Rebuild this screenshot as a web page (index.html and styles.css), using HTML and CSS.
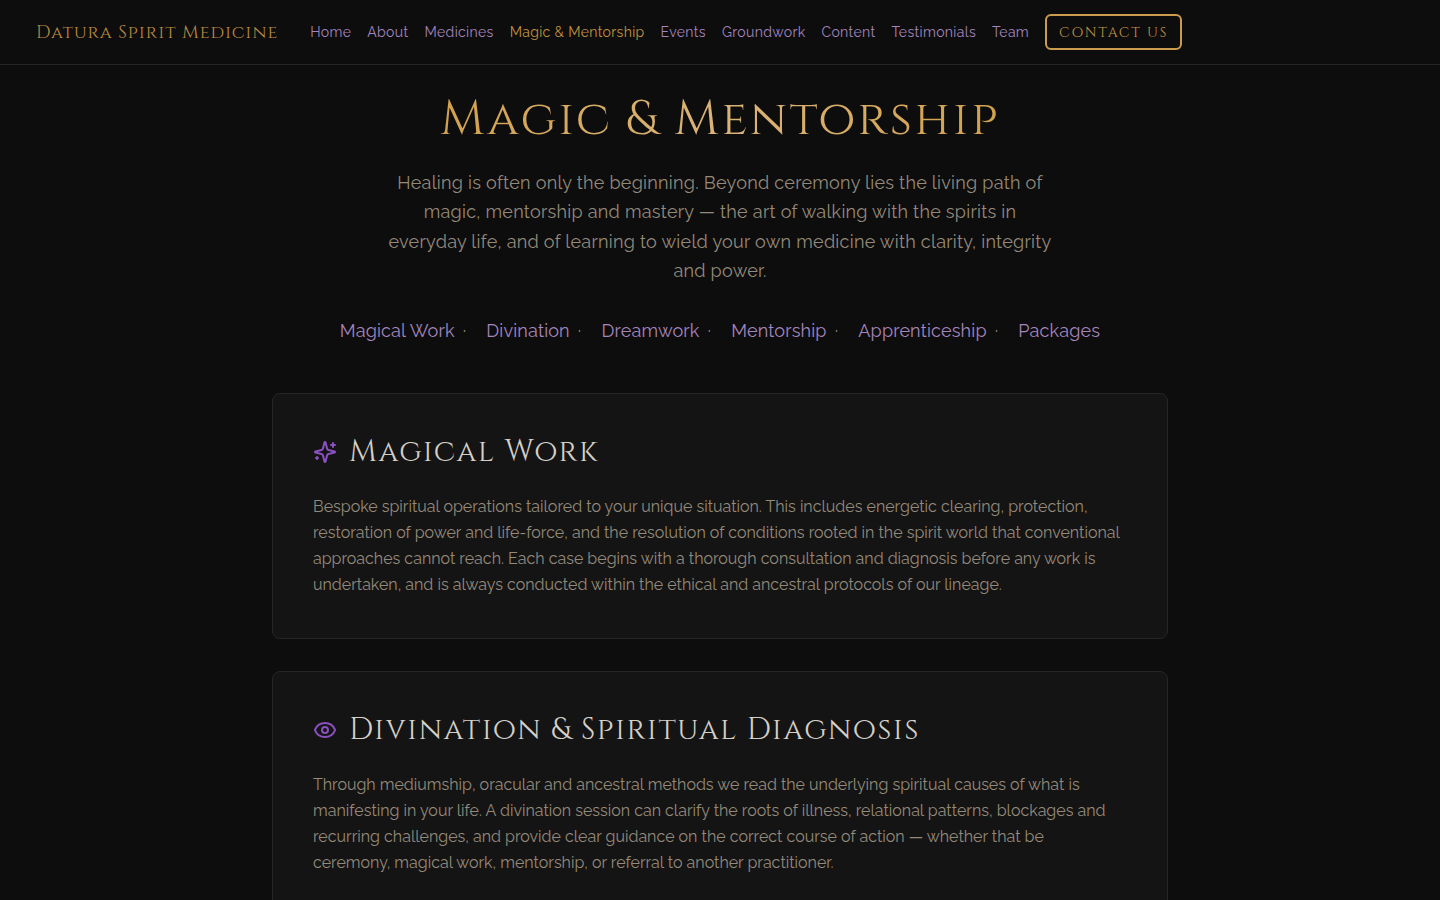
FILE: index.html
```html
<!DOCTYPE html>
<html lang="en">
<head>
<meta charset="utf-8">
<meta name="viewport" content="width=device-width, initial-scale=1">
<title>Magic &amp; Mentorship | Datura Spirit Medicine</title>
<link rel="stylesheet" href="styles.css">
</head>
<body>
<header class="site-header">
  <a class="brand" href="#">Datura Spirit Medicine</a>
  <nav class="main-nav" aria-label="Main">
    <a href="#">Home</a>
    <a href="#">About</a>
    <a href="#">Medicines</a>
    <a class="active" href="#" aria-current="page">Magic &amp; Mentorship</a>
    <a href="#">Events</a>
    <a href="#">Groundwork</a>
    <a href="#">Content</a>
    <a href="#">Testimonials</a>
    <a href="#">Team</a>
    <button class="contact" type="button">CONTACT US</button>
  </nav>
</header>
<main class="page">
  <h1 class="title">Magic &amp; Mentorship</h1>
  <p class="intro">Healing is often only the beginning. Beyond ceremony lies the living path of magic, mentorship and mastery — the art of walking with the spirits in everyday life, and of learning to wield your own medicine with clarity, integrity and power.</p>
  <nav class="sections" aria-label="On this page">
    <span><a href="#magical-work">Magical Work</a><i>·</i></span>
    <span><a href="#divination">Divination</a><i>·</i></span>
    <span><a href="#">Dreamwork</a><i>·</i></span>
    <span><a href="#">Mentorship</a><i>·</i></span>
    <span><a href="#">Apprenticeship</a><i>·</i></span>
    <span><a href="#">Packages</a></span>
  </nav>
  <div class="cards">
    <section class="card" id="magical-work">
      <h2 class="card-title">
        <svg class="icon" viewBox="0 0 24 24" aria-hidden="true"><path d="M9.937 15.5A2 2 0 0 0 8.5 14.063l-6.135-1.582a.5.5 0 0 1 0-.962L8.5 9.936A2 2 0 0 0 9.937 8.5l1.582-6.135a.5.5 0 0 1 .963 0L14.063 8.5A2 2 0 0 0 15.5 9.937l6.135 1.581a.5.5 0 0 1 0 .964L15.5 14.063a2 2 0 0 0-1.437 1.437l-1.582 6.135a.5.5 0 0 1-.963 0z"/><path d="M20 3v4"/><path d="M22 5h-4"/><path d="M4 17v2"/><path d="M5 18H3"/></svg>
        Magical Work
      </h2>
      <p class="card-text">Bespoke spiritual operations tailored to your unique situation. This includes energetic clearing, protection, restoration of power and life-force, and the resolution of conditions rooted in the spirit world that conventional approaches cannot reach. Each case begins with a thorough consultation and diagnosis before any work is undertaken, and is always conducted within the ethical and ancestral protocols of our lineage.</p>
    </section>
    <section class="card" id="divination">
      <h2 class="card-title">
        <svg class="icon" viewBox="0 0 24 24" aria-hidden="true"><path d="M2.062 12.348a1 1 0 0 1 0-.696 10.75 10.75 0 0 1 19.876 0 1 1 0 0 1 0 .696 10.75 10.75 0 0 1-19.876 0"/><circle cx="12" cy="12" r="3"/></svg>
        Divination &amp; Spiritual Diagnosis
      </h2>
      <p class="card-text">Through mediumship, oracular and ancestral methods we read the underlying spiritual causes of what is manifesting in your life. A divination session can clarify the roots of illness, relational patterns, blockages and recurring challenges, and provide clear guidance on the correct course of action — whether that be ceremony, magical work, mentorship, or referral to another practitioner.</p>
    </section>
  </div>
</main>
</body>
</html>
```
FILE: styles.css
```css
* { box-sizing: border-box; }

body {
  margin: 0;
  background: #0d0d0d;
  color: #948a7b;
  font-family: Raleway, Lato, sans-serif;
  font-size: 18px;
}

a { color: inherit; text-decoration: none; }

.brand, .title, .card-title, .contact {
  font-family: Cinzel, "Liberation Serif", serif;
  font-weight: 400;
}

.site-header {
  display: flex;
  align-items: center;
  gap: 32px;
  min-height: 65px;
  padding: 0 36px;
  border-bottom: 1px solid #262626;
}

.brand { color: #b98a40; font-size: 18px; letter-spacing: 1px; white-space: nowrap; }

.main-nav {
  display: flex;
  align-items: center;
  gap: 16px;
  color: #a585bd;
  font-size: 14px;
  letter-spacing: 0.025em;
  white-space: nowrap;
}
.main-nav .active { color: #c3923f; }

.contact {
  height: 36px;
  padding: 0 12px;
  border: 2px solid #cc9c4e;
  border-radius: 6px;
  background: transparent;
  color: #c49548;
  font-size: 14px;
  font-weight: 500;
  letter-spacing: 0.125em;
}

.page { max-width: 896px; margin: 0 auto; padding: 25px 0 0; }

.title {
  width: fit-content;
  margin: 0 auto 18px;
  background: linear-gradient(90deg, #d2a14d, #dbb479, #d2a14d);
  background-clip: text;
  color: transparent;
  font-size: 48px;
  line-height: 60px;
  letter-spacing: 0.05em;
  text-align: center;
}

.intro {
  max-width: 672px;
  margin: 0 auto;
  line-height: 1.625;
  letter-spacing: 0.015em;
  text-align: center;
}

.sections {
  display: flex;
  justify-content: center;
  gap: 20px;
  margin: 32px 0 48px;
  line-height: 28px;
  letter-spacing: 0.01em;
  color: #a585bd;
}
.sections i { margin-left: 8px; color: #948a7b; font-style: normal; }

.cards { display: grid; gap: 32px; }

.card {
  padding: 40px;
  border: 1px solid #262626;
  border-radius: 8px;
  background: #141414;
}

.card-title {
  display: flex;
  align-items: center;
  gap: 12px;
  margin: 0 0 24px;
  color: #d4d0c8;
  font-size: 30px;
  line-height: 36px;
  letter-spacing: 0.05em;
}

.icon {
  width: 24px;
  height: 24px;
  flex: none;
  fill: none;
  stroke: #8a50c0;
  stroke-width: 2;
  stroke-linecap: round;
  stroke-linejoin: round;
}

.card-text { max-width: 810px; margin: 0; font-size: 16px; line-height: 26px; }
```
